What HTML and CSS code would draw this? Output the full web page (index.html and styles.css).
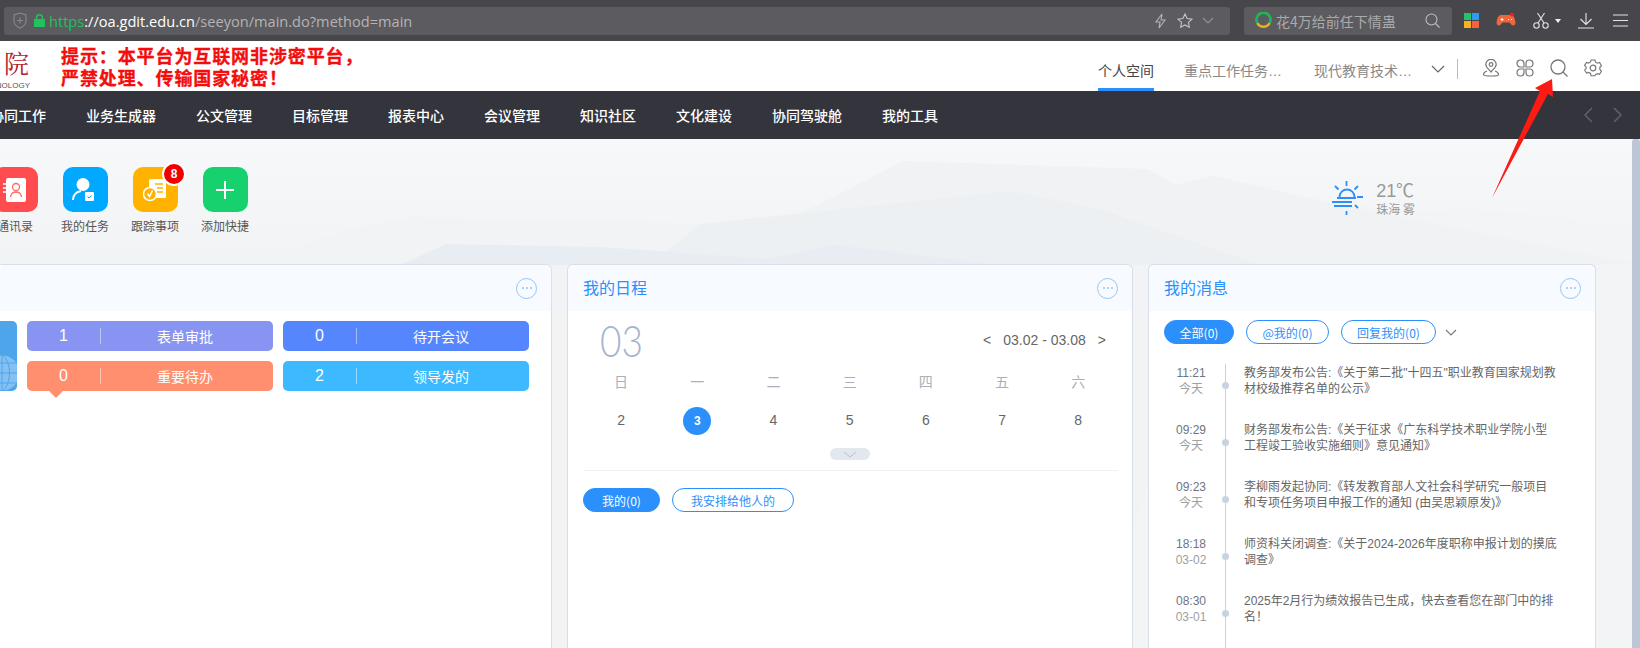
FILE: index.html
```html
<!DOCTYPE html>
<html lang="zh-CN">
<head>
  <meta charset="UTF-8">
  <title>协同办公平台</title>
  <link rel="stylesheet" href="styles.css">
</head>
<body>

<!-- browser chrome -->
<div class="browser">
  <div class="address">
    <svg class="shield" width="14" height="17" viewBox="0 0 14 17" fill="none" stroke="#8a8a8d" stroke-width="1.1"><path d="M7 1l6 2v6c0 3.4-2.6 5.6-6 7-3.4-1.400-6-3.600-6-7V3z"/><path d="M7 5.500v6M4 8.500h6"/></svg>
    <svg class="lock" width="11" height="13" viewBox="0 0 11 13"><path fill="#1fc25b" d="M0 5h1.800V3.700a3.700 3.700 0 0 1 7.400 0V5H11v8H0zM3.300 5h4.400V3.700a2.200 2.200 0 0 0-4.400 0z"/></svg>
    <div class="url"><span class="url-https">https</span><span class="url-host">://oa.gdit.edu.cn</span><span class="url-path">/seeyon/main.do?method=main</span></div>
    <svg class="addr-icon" width="13" height="16" viewBox="0 0 13 16" fill="none" stroke="#b5b5b7" stroke-width="1.100"><path d="M8 1L2 9h4l-1 6 6-8H7z"/></svg>
    <svg class="addr-icon star" width="16" height="15" viewBox="0 0 16 15" fill="none" stroke="#c4c4c6" stroke-width="1.100"><path d="M8 1l2.100 4.500 4.900.6-3.600 3.300.9 4.800L8 11.900l-4.300 2.300.9-4.800L1 6.100l4.900-.6z"/></svg>
    <svg class="addr-icon" width="12" height="7" viewBox="0 0 12 7" fill="none" stroke="#909092" stroke-width="1.100"><path d="M1 1l5 5 5-5"/></svg>
  </div>
  <div class="search-box">
    <svg width="17" height="17" viewBox="0 0 17 17" fill="none" stroke-width="2.600"><path stroke="#e8b21a" d="M2.300 11a7 7 0 0 0 12.400 0"/><path stroke="#1fb55a" d="M14.700 11A7 7 0 1 0 2.300 11"/></svg>
    <span class="search-text">花4万给前任下情蛊</span>
    <svg class="search-mag" width="15" height="15" viewBox="0 0 15 15" fill="none" stroke="#bdbdbf" stroke-width="1.100"><circle cx="6.500" cy="6.500" r="5.500"/><path d="M10.500 10.500l4 4"/></svg>
  </div>
  <div class="tools">
    <span class="win-tile"><i class="t-green"></i><i class="t-blue"></i><i class="t-yellow"></i><i class="t-red"></i></span>
    <svg width="20" height="17" viewBox="0 0 20 17"><path fill="#f0663c" d="M5 3h10c2.600 0 4 3.300 4.400 7.500.3 3-2.500 4-4.200 2l-1.700-2H6.500l-1.700 2c-1.700 2-4.500 1-4.200-2C1 6.300 2.400 3 5 3z"/><circle cx="16" cy="2.500" r="2" fill="#f02020"/><path stroke="#fff" stroke-width="1.100" d="M4.500 7.500h3M6 6v3M12 7.500h1M15 7.500h1"/></svg>
    <svg width="16" height="17" viewBox="0 0 16 17" fill="none" stroke="#e4e4e6" stroke-width="1.100"><circle cx="3.500" cy="13.500" r="2.700"/><circle cx="12.500" cy="13.500" r="2.700"/><path d="M5 11L11.500 1M11 11L4.500 1"/></svg>
    <span class="caret"></span>
    <svg width="16" height="16" viewBox="0 0 16 16" fill="none" stroke="#e4e4e6" stroke-width="1.100"><path d="M8 0v11M2.500 6L8 11.500 13.500 6M0 15h16"/></svg>
    <svg class="tool-menu" width="15" height="13" viewBox="0 0 15 13" stroke="#e4e4e6" stroke-width="1.200"><path d="M0 1h15M0 6.500h15M0 12h15"/></svg>
  </div>
</div>

<!-- site header -->
<div class="header">
  <div class="logo">
    <span class="logo-char">院</span>
    <span class="logo-en">HNOLOGY</span>
  </div>
  <div class="notice">提示：本平台为互联网非涉密平台，<br>严禁处理、传输国家秘密！</div>
  <div class="tabs">
    <div class="tab active">个人空间</div>
    <div class="tab">重点工作任务…</div>
    <div class="tab">现代教育技术…</div>
  </div>
  <svg class="tab-more" width="14" height="8" viewBox="0 0 14 8" fill="none" stroke="#666" stroke-width="1.200"><path d="M1 1l6 6 6-6"/></svg>
  <span class="head-sep"></span>
  <div class="head-icons">
    <svg width="18" height="18" viewBox="0 0 18 18" fill="none" stroke="#777" stroke-width="1.200"><path d="M9 13C6 9.500 3.800 8 3.800 5.500a5.200 5.200 0 0 1 10.400 0C14.200 8 12 9.500 9 13z"/><circle cx="9" cy="5.500" r="1.800"/><path d="M5 12c-2.500 1-3.500 2.500-3.500 3.500 0 1 1.500 1.500 7.500 1.500s7.500-.5 7.500-1.500c0-1-1-2.500-3.500-3.500"/></svg>
    <svg width="18" height="18" viewBox="0 0 18 18" fill="none" stroke="#777" stroke-width="1.200"><path d="M8 8H4.500A3.500 3.500 0 1 1 8 4.500zM10 8h3.500A3.500 3.500 0 1 0 10 4.500zM8 10H4.500A3.500 3.500 0 1 0 8 13.500zM10 10h3.500a3.500 3.500 0 1 1-3.500 3.500z"/></svg>
    <svg width="18" height="18" viewBox="0 0 18 18" fill="none" stroke="#777" stroke-width="1.300"><circle cx="8" cy="8" r="7"/><path d="M13 13l4.500 4.500"/></svg>
    <svg width="18" height="18" viewBox="0 0 18 18" fill="none" stroke="#777" stroke-width="1.200"><path d="M7 1h4l.6 2.300 1.900 1.100 2.300-.7 2 3.300-1.700 1.700v2.200l1.700 1.700-2 3.300-2.300-.7-1.900 1.100L11 17.400H7l-.6-2.300-1.900-1.100-2.300.7-2-3.300 1.700-1.700V8.500L.2 6.800l2-3.300 2.300.7 1.900-1.100z" transform="scale(.96) translate(.4 0)"/><circle cx="9" cy="9" r="2.800"/></svg>
  </div>
</div>

<!-- main nav -->
<div class="nav">
  <a class="nav-item first">协同工作</a>
  <a class="nav-item">业务生成器</a>
  <a class="nav-item">公文管理</a>
  <a class="nav-item">目标管理</a>
  <a class="nav-item">报表中心</a>
  <a class="nav-item">会议管理</a>
  <a class="nav-item">知识社区</a>
  <a class="nav-item">文化建设</a>
  <a class="nav-item">协同驾驶舱</a>
  <a class="nav-item">我的工具</a>
  <div class="nav-arrows">
    <svg width="10" height="16" viewBox="0 0 10 16" fill="none" stroke="#5f6068" stroke-width="1.500"><path d="M9 1L2 8l7 7"/></svg>
    <svg width="10" height="16" viewBox="0 0 10 16" fill="none" stroke="#5f6068" stroke-width="1.500"><path d="M1 1l7 7-7 7"/></svg>
  </div>
</div>

<div class="main">
  <!-- faint mountains behind the page -->
  <svg class="mountains" width="1640" height="509" viewBox="0 0 1640 509">
    <path fill="#f2f4f5" d="M1230 62C1330 58 1400 78 1460 70 1530 72 1590 85 1640 95V509H1100z"/>
    <path fill="#f0f2f4" d="M700 126L797 75 820 65 903 22 1148 30 1175 46 1213 37 1350 68 1640 126z"/>
    <path fill="#f1f3f4" d="M250 126L350 90 411 78 700 85 1011 52 1100 70 1200 105 1260 126z"/>
    <path fill="#edf0f2" d="M650 126L700 85 1011 52 1100 70 1200 105 1260 126z"/>
    <path fill="#e8edf3" d="M400 126L446 105 600 108 769 120 835 106 1000 126z"/>
  </svg>

  <div class="content">
    <div class="quick">
      <div class="quick-item">
        <div class="quick-tile red">
          <svg width="24" height="26" viewBox="0 0 24 26"><rect x="3" y="1" width="20" height="24" rx="2" fill="#fff"/><circle cx="13" cy="10" r="3.500" fill="none" stroke="#ff6b6b" stroke-width="1.300"/><path d="M7.500 20c.5-3.500 2.500-5 5.500-5s5 1.500 5.500 5" fill="none" stroke="#ff6b6b" stroke-width="1.300"/><path d="M0 7h4M0 11h4M0 15h4" stroke="#fff" stroke-width="1.300"/></svg>
        </div>
        <span class="quick-label">通讯录</span>
      </div>
      <div class="quick-item">
        <div class="quick-tile blue">
          <svg width="26" height="26" viewBox="0 0 26 26"><circle cx="11" cy="7.500" r="6.500" fill="#fff"/><path d="M1 23c0-5 3-8 8-9" fill="none" stroke="#fff" stroke-width="2"/><rect x="13" y="15" width="9" height="9" rx="1" fill="#fff"/><path d="M15.500 19.500l1.500 1.500 2.500-2.500" fill="none" stroke="#00a8ff" stroke-width="1"/></svg>
        </div>
        <span class="quick-label">我的任务</span>
      </div>
      <div class="quick-item">
        <div class="quick-tile yellow">
          <svg width="24" height="24" viewBox="0 0 24 24"><rect x="6" y="1" width="17" height="19" rx="1.500" fill="#fff"/><path d="M12 6h8M14 10h6M14 14h6" stroke="#ffb300" stroke-width="1.500"/><circle cx="7" cy="16" r="6.500" fill="#ffb300" stroke="#fff" stroke-width="1.500"/><path d="M4.500 15.500l2 3 3-6" fill="none" stroke="#fff" stroke-width="1.500"/></svg>
        </div>
        <span class="badge">8</span>
        <span class="quick-label">跟踪事项</span>
      </div>
      <div class="quick-item">
        <div class="quick-tile green">
          <svg width="18" height="18" viewBox="0 0 18 18" stroke="#fff" stroke-width="2"><path d="M9 0v18M0 9h18"/></svg>
        </div>
        <span class="quick-label">添加快捷</span>
      </div>
      <div class="weather">
        <svg width="33" height="34" viewBox="0 0 33 34" fill="none" stroke="#2b90fb" stroke-width="1.800"><path d="M15.500 0v5M4 5l3.500 3.500M27 5l-3.500 3.500M26 16h6M24 24l3 3M15.500 30v4"/><path d="M8.500 16a7.500 7.500 0 0 1 15 0"/><path d="M6 17h19M1 21h20M3 25h18"/></svg>
        <div>
          <div class="temp">21℃</div>
          <div class="city">珠海 雾</div>
        </div>
      </div>
    </div>

    <div class="cards">
      <div class="card card-todo">
        <div class="card-head">
          <span></span>
          <span class="more"><i></i><i></i><i></i></span>
        </div>
        <div class="todo-body">
          <div class="globe">
            <svg width="17" height="70" viewBox="0 0 17 70" fill="none" stroke="#4ea5ea" stroke-width="1"><circle cx="2" cy="52" r="18" fill="#84c1f2"/><path d="M-16 52h36M2 34v36M-14 42h32M-14 62h32M2 34c10 6 10 30 0 36"/></svg>
          </div>
          <div class="stat-grid">
            <div class="stat purple"><span class="stat-num">1</span><span class="stat-name">表单审批</span></div>
            <div class="stat indigo"><span class="stat-num">0</span><span class="stat-name">待开会议</span></div>
            <div class="stat orange"><span class="stat-num">0</span><span class="stat-name">重要待办</span></div>
            <div class="stat sky"><span class="stat-num">2</span><span class="stat-name">领导发的</span></div>
          </div>
        </div>
      </div>

      <div class="card card-cal">
        <div class="card-head">
          <span class="card-title">我的日程</span>
          <span class="more"><i></i><i></i><i></i></span>
        </div>
        <div class="cal-top">
          <span class="cal-day">03</span>
          <div class="cal-range"><span>&lt;</span><span>03.02 - 03.08</span><span>&gt;</span></div>
        </div>
        <div class="cal-grid weekdays">
          <span>日</span><span>一</span><span>二</span><span>三</span><span>四</span><span>五</span><span>六</span>
        </div>
        <div class="cal-grid dates">
          <span>2</span><span><b class="today">3</b></span><span>4</span><span>5</span><span>6</span><span>7</span><span>8</span>
        </div>
        <div class="cal-expand">
          <svg width="14" height="7" viewBox="0 0 14 7" fill="none" stroke="#b9c0cc" stroke-width="1"><path d="M1 1l6 5 6-5"/></svg>
        </div>
        <div class="pill-row">
          <span class="pill on w-mine">我的(0)</span>
          <span class="pill w-assign">我安排给他人的</span>
        </div>
      </div>

      <div class="card card-msg">
        <div class="card-head">
          <span class="card-title">我的消息</span>
          <span class="more"><i></i><i></i><i></i></span>
        </div>
        <div class="pill-row msg-pills">
          <span class="pill on w-all">全部(0)</span>
          <span class="pill w-at">@我的(0)</span>
          <span class="pill w-reply">回复我的(0)</span>
          <svg class="pill-more" width="12" height="7" viewBox="0 0 12 7" fill="none" stroke="#777" stroke-width="1.100"><path d="M1 1l5 5 5-5"/></svg>
        </div>
        <div class="msg-list">
          <div class="msg">
            <div class="msg-time"><span>11:21</span><span class="msg-date">今天</span></div>
            <div class="msg-text">教务部发布公告:《关于第二批"十四五"职业教育国家规划教材校级推荐名单的公示》</div>
          </div>
          <div class="msg">
            <div class="msg-time"><span>09:29</span><span class="msg-date">今天</span></div>
            <div class="msg-text">财务部发布公告:《关于征求《广东科学技术职业学院小型工程竣工验收实施细则》意见通知》</div>
          </div>
          <div class="msg">
            <div class="msg-time"><span>09:23</span><span class="msg-date">今天</span></div>
            <div class="msg-text">李柳雨发起协同:《转发教育部人文社会科学研究一般项目和专项任务项目申报工作的通知 (由吴思颖原发)》</div>
          </div>
          <div class="msg">
            <div class="msg-time"><span>18:18</span><span class="msg-date">03-02</span></div>
            <div class="msg-text">师资科关闭调查:《关于2024-2026年度职称申报计划的摸底调查》</div>
          </div>
          <div class="msg">
            <div class="msg-time"><span>08:30</span><span class="msg-date">03-01</span></div>
            <div class="msg-text">2025年2月行为绩效报告已生成，快去查看您在部门中的排名！</div>
          </div>
        </div>
      </div>
    </div>
  </div>
  <div class="scrollbar"></div>
</div>

<!-- red annotation arrow drawn over the screenshot -->
<svg class="arrow" width="1640" height="648" viewBox="0 0 1640 648"><path fill="#fb1a14" d="M1552 79L1553 97 1548 94 1492 198 1540 91 1535 88z"/></svg>

</body>
</html>
```

FILE: styles.css
```css
* {
  box-sizing: border-box;
}
html, body {
  margin: 0;
  height: 648px;
  overflow: hidden;
}
body {
  position: relative;
  display: flex;
  flex-direction: column;
  font-family: "Liberation Sans", "Noto Sans CJK SC", sans-serif;
  font-size: 12px;
  color: #666;
  background: #f1f2f3;
}

/* browser chrome */
.browser {
  flex: 0 0 41px;
  display: flex;
  align-items: center;
  padding: 0 0 0 4px;
  background: #47464b;
}
.address {
  width: 1226px;
  height: 28px;
  display: flex;
  align-items: center;
  padding: 0 16px 0 9px;
  background: #5c5b5f;
  border-radius: 3px;
}
.shield {
  margin-right: 7px;
}
.lock {
  margin-right: 4px;
}
.url {
  flex: 1;
  font-family: "Open Sans", "Noto Sans", sans-serif;
  font-size: 14.6px;
  white-space: nowrap;
}
.url-https {
  color: #1fc25b;
}
.url-host {
  color: #fff;
}
.url-path {
  color: #b4b4b6;
}
.addr-icon {
  margin-left: 9px;
}
.addr-icon.star {
  margin-left: 10px;
}
.search-box {
  width: 208px;
  height: 28px;
  margin-left: 14px;
  display: flex;
  align-items: center;
  padding: 0 12px 0 11px;
  background: #5c5b5f;
  border-radius: 3px;
}
.search-text {
  flex: 1;
  margin-left: 4px;
  font-family: "Noto Sans CJK SC", sans-serif;
  font-size: 14px;
  color: #aaa;
}
.tools {
  display: flex;
  align-items: center;
  gap: 17px;
  margin-left: 12px;
}
.win-tile {
  width: 15px;
  height: 15px;
  display: grid;
  grid-template-columns: 1fr 1fr;
  gap: 1px;
}
.win-tile i {
  display: block;
}
.t-green { background: #27c16a; }
.t-blue { background: #2d9bf0; }
.t-yellow { background: #fbb11b; }
.t-red { background: #f4623f; }
.caret {
  width: 0;
  height: 0;
  margin: 0 0 0 -11px;
  border: 3px solid transparent;
  border-top: 4px solid #eee;
  border-bottom: 0;
}
.tool-menu {
  margin-left: 2px;
}

/* header */
.header {
  flex: 0 0 50px;
  display: flex;
  align-items: center;
  background: #fff;
  font-family: "Noto Sans CJK SC", sans-serif;
}
.logo {
  width: 61px;
  height: 50px;
  position: relative;
  overflow: hidden;
}
.logo-char {
  position: absolute;
  left: 4px;
  top: 7px;
  font-family: "Noto Serif CJK SC", "Noto Sans CJK SC", serif;
  font-size: 25px;
  line-height: 28px;
  color: #b5212b;
}
.logo-en {
  position: absolute;
  left: -10px;
  top: 40px;
  font-family: "Liberation Sans", sans-serif;
  font-size: 8px;
  line-height: 10px;
  color: #555;
}
.notice {
  flex: 1;
  font-size: 18px;
  font-weight: 700;
  line-height: 22px;
  letter-spacing: .9px;
  color: #f40d0d;
  -webkit-text-stroke: .3px #f40d0d;
}
.tabs {
  align-self: stretch;
  display: flex;
  gap: 30px;
  margin-right: -1px;
}
.tab {
  width: 100px;
  padding-top: 20px;
  font-family: "Liberation Sans", "Noto Sans CJK SC", sans-serif;
  font-size: 14px;
  line-height: 20px;
  color: #888;
  white-space: nowrap;
}
.tab.active {
  width: 56px;
  color: #444;
  border-bottom: 3px solid #2b90fb;
}
.tab-more {
  margin: 6px 12px 0 18px;
}
.head-sep {
  width: 1px;
  height: 20px;
  background: #bbb;
  margin-top: 6px;
}
.head-icons {
  display: flex;
  gap: 16px;
  margin: 3px 38px 0 24px;
}

/* nav */
.nav {
  flex: 0 0 48px;
  display: flex;
  align-items: center;
  gap: 40px;
  padding-left: 0;
  background: #33343c;
  font-family: "Noto Sans CJK SC", sans-serif;
}
.nav-item {
  font-size: 14px;
  font-weight: 500;
  color: #fff;
  white-space: nowrap;
}
.nav-item.first {
  margin-left: -10px;
}
.nav-arrows {
  display: flex;
  gap: 20px;
  margin-left: auto;
  margin-right: 17px;
}

/* main */
.main {
  position: relative;
  flex: 1;
  min-height: 0;
  display: flex;
  overflow: hidden;
  background: linear-gradient(#f7f8f9, #f2f3f4 126px);
}
.mountains {
  position: absolute;
  left: 0;
  top: 0;
}
.content {
  position: relative;
  flex: 1;
  min-width: 0;
  display: flex;
  flex-direction: column;
}
.scrollbar {
  position: relative;
  flex: 0 0 8px;
  background: #bcc6d6;
  border-radius: 3px 3px 0 0;
}
.quick {
  flex: 0 0 125px;
  display: flex;
  padding-top: 28px;
  margin-left: -20px;
  font-family: "Noto Sans CJK SC", sans-serif;
}
.quick-item {
  position: relative;
  width: 70px;
  display: flex;
  flex-direction: column;
  align-items: center;
}
.quick-tile {
  width: 45px;
  height: 45px;
  display: flex;
  align-items: center;
  justify-content: center;
  border-radius: 10px;
}
.quick-tile.red { background: #ff4d4f; }
.quick-tile.blue { background: #00a8ff; }
.quick-tile.yellow { background: #ffb300; }
.quick-tile.green { background: #16d16d; }
.quick-label {
  margin-top: 5px;
  font-size: 12px;
  line-height: 18px;
  color: #555;
  white-space: nowrap;
}
.badge {
  position: absolute;
  left: 42px;
  top: -5px;
  width: 24px;
  height: 24px;
  border-radius: 50%;
  border: 2px solid #fff;
  background: #f00000;
  color: #fff;
  font-family: "Liberation Sans", sans-serif;
  font-size: 12px;
  font-weight: 700;
  line-height: 20px;
  text-align: center;
}
.weather {
  display: flex;
  gap: 12px;
  height: 34px;
  margin-left: auto;
  margin-right: 217px;
  margin-top: 14px;
}
.temp {
  font-family: "Liberation Sans", sans-serif;
  font-size: 18px;
  line-height: 20px;
  color: #999;
}
.city {
  font-size: 12px;
  line-height: 16px;
  color: #999;
}

/* cards */
.cards {
  flex: 1;
  min-height: 0;
  display: flex;
  gap: 16px;
  margin-right: 36px;
  margin-left: 0;
}
.card {
  background: #fff;
  border: 1px solid #d8dfe9;
  border-bottom: 0;
  border-radius: 6px 6px 0 0;
}
.card-todo {
  flex: 0 0 552px;
  margin-right: -1px;
  border-left: 0;
  border-radius: 0 6px 0 0;
}
.card-cal {
  flex: 0 0 566px;
  margin-right: -1px;
}
.card-msg {
  flex: 1;
  min-width: 0;
}
.card-head {
  height: 46px;
  display: flex;
  align-items: center;
  justify-content: space-between;
  padding: 0 14px;
  background: #f7faff;
  border-radius: 6px 6px 0 0;
}
.card-cal .card-head {
  padding-left: 15px;
}
.card-msg .card-head {
  padding-left: 15px;
}
.card-title {
  padding-bottom: 2px;
  font-family: "Noto Sans CJK SC", sans-serif;
  font-size: 16px;
  color: #2b90fb;
}
.more {
  width: 21px;
  height: 21px;
  display: flex;
  align-items: center;
  justify-content: center;
  gap: 2px;
  border: 1px solid #97c5f6;
  border-radius: 50%;
}
.more i {
  width: 2px;
  height: 2px;
  border-radius: 50%;
  background: #97c5f6;
}

/* todo card */
.todo-body {
  display: flex;
  gap: 10px;
  padding-top: 10px;
}
.globe {
  width: 17px;
  height: 70px;
  overflow: hidden;
  background: #4ea5ea;
  border-radius: 0 5px 5px 0;
}
.stat-grid {
  display: grid;
  grid-template-columns: 246px 246px;
  grid-auto-rows: 30px;
  gap: 10px;
}
.stat {
  position: relative;
  display: flex;
  align-items: center;
  border-radius: 5px;
  color: #fff;
}
.stat.purple { background: #8794f2; }
.stat.indigo { background: #5686fe; }
.stat.orange { background: #ff8f6e; }
.stat.sky { background: #3cb9ff; }
.stat.orange::after {
  content: "";
  position: absolute;
  left: 22px;
  top: 30px;
  border: 7px solid transparent;
  border-top-color: #ff8f6e;
  border-bottom: 0;
}
.stat-num {
  width: 74px;
  font-size: 16px;
  line-height: 16px;
  text-align: center;
  border-right: 1px solid rgba(255,255,255,.45);
}
.stat-name {
  flex: 1;
  padding-right: 4px;
  font-family: "Noto Sans CJK SC", sans-serif;
  font-size: 14px;
  text-align: center;
}

/* calendar card */
.cal-top {
  height: 58px;
  display: flex;
  align-items: center;
  justify-content: space-between;
  padding: 0 26px 0 32px;
}
.cal-day {
  display: inline-block;
  font-family: Lato, sans-serif;
  font-weight: 300;
  font-size: 37px;
  color: #a4b6cb;
  transform: scaleY(1.15);
}
.cal-range {
  display: flex;
  gap: 12px;
  font-size: 14px;
  color: #666;
}
.cal-grid {
  display: grid;
  grid-template-columns: repeat(7, 76.2px);
  margin-left: 15px;
  text-align: center;
  font-family: "Noto Sans CJK SC", sans-serif;
}
.weekdays {
  height: 20px;
  margin-top: 2px;
  font-size: 14px;
  line-height: 20px;
  color: #aab0ba;
}
.dates {
  height: 28px;
  margin-top: 15px;
  font-family: "Liberation Sans", sans-serif;
  font-size: 14px;
  line-height: 28px;
  color: #666;
}
.today {
  display: inline-block;
  width: 28px;
  height: 28px;
  border-radius: 50%;
  background: #2b90fb;
  color: #fff;
  font-size: 12px;
}
.cal-expand {
  width: 40px;
  height: 12px;
  margin: 14px auto 0;
  display: flex;
  align-items: center;
  justify-content: center;
  background: #e3e7ee;
  border-radius: 6px;
}
.pill-row {
  display: flex;
  gap: 12px;
  align-items: center;
  margin: 10px 14px 0 15px;
  padding-top: 17px;
  border-top: 1px solid #f0f2f5;
}
.pill {
  height: 24px;
  display: flex;
  align-items: center;
  justify-content: center;
  border: 1px solid #2b90fb;
  border-radius: 12px;
  font-family: "Noto Sans CJK SC", sans-serif;
  font-size: 12px;
  color: #2b90fb;
  white-space: nowrap;
}
.pill.on {
  background: #2b90fb;
  color: #fff;
}
.w-mine { width: 77px; }
.w-assign { width: 122px; }
.w-all { width: 70px; }
.w-at { width: 83px; }
.w-reply { width: 95px; }

/* message card */
.msg-pills {
  margin: 9px 15px 0;
  padding: 0;
  border: 0;
}
.pill-more {
  margin-left: -3px;
}
.msg-list {
  position: relative;
  margin-top: 21px;
}
.msg-list::before {
  content: "";
  position: absolute;
  left: 76px;
  top: -1px;
  height: 300px;
  width: 1px;
  background: #c8d3e2;
}
.msg {
  position: relative;
  height: 57px;
  display: flex;
}
.msg::before {
  content: "";
  position: absolute;
  left: 73px;
  top: 17px;
  width: 7px;
  height: 7px;
  border-radius: 50%;
  background: #c8d3e2;
}
.msg-time {
  width: 84px;
  display: flex;
  flex-direction: column;
  text-align: center;
  line-height: 16px;
  color: #6d7584;
  font-size: 12px;
}
.msg-date {
  color: #a0a0a0;
}
.msg-text {
  width: 314px;
  margin-left: 11px;
  font-size: 12px;
  line-height: 16px;
  color: #666;
}

/* annotation */
.arrow {
  position: absolute;
  left: 0;
  top: 0;
  pointer-events: none;
}
```
